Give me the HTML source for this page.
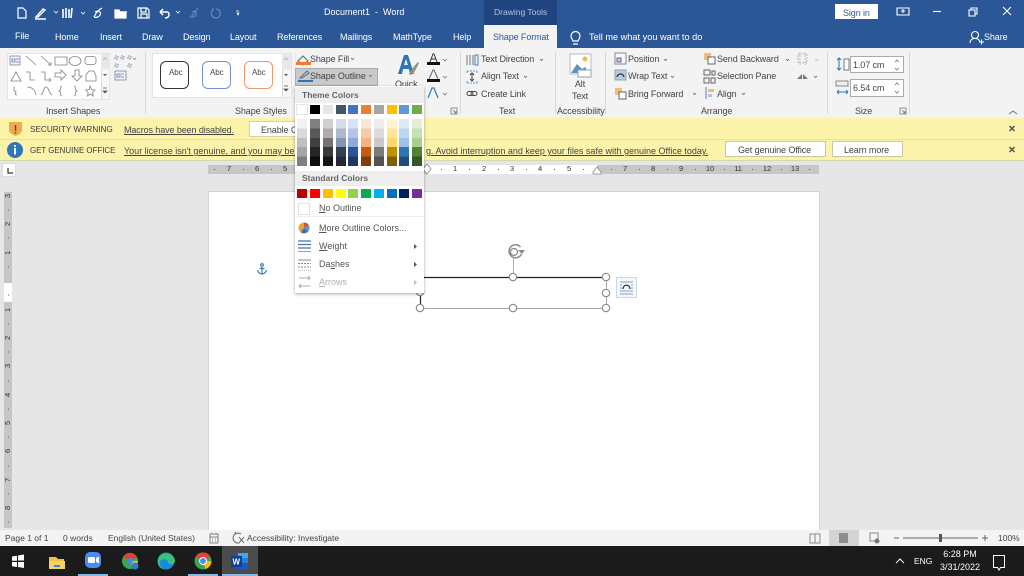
<!DOCTYPE html>
<html lang="en"><head><meta charset="utf-8"><title>Document1 - Word</title>
<style>
html,body{margin:0;padding:0;width:1024px;height:576px;overflow:hidden;background:#e6e6e6}
body{position:relative;font-family:"Liberation Sans",sans-serif;font-size:9px;letter-spacing:-.1px;color:#444}
.b,.t{position:absolute}
.t{white-space:nowrap;line-height:12px}
.w{color:#fff}
.c{transform:translateX(-50%)}
u{text-underline-offset:1px}
svg{position:absolute;left:0;top:0}
.r{font-size:7.5px;color:#333;line-height:8px;transform:translateX(-50%)}
.v{font-size:7.5px;color:#333;line-height:8px;left:8px;transform:translate(-50%,-50%) rotate(-90deg)}
.col{position:absolute;width:10px;top:119px;height:47px}
.sw{position:absolute;width:10px;height:9px}
.m{font-size:9px;letter-spacing:0;color:#555}
.s{font-size:8.5px;letter-spacing:0}
.caps{font-size:8.2px;letter-spacing:0;color:#3a3a3a}
</style></head><body>

<!-- base regions -->
<div class="b" style="left:0;top:0;width:1024px;height:48px;background:#2b5797"></div>
<div class="b" style="left:484px;top:0;width:73px;height:25px;background:#1f4480"></div>
<div class="b" style="left:484px;top:25px;width:73px;height:23px;background:#f3f3f3"></div>
<div class="b" style="left:0;top:48px;width:1024px;height:70px;background:#f3f3f3"></div>
<div class="b" style="left:0;top:118px;width:1024px;height:22px;background:#fbf3a9;border-bottom:1px solid #e6dfa8;box-sizing:border-box"></div>
<div class="b" style="left:0;top:140px;width:1024px;height:21px;background:#fbf3a9;border-bottom:1px solid #d9d5ac;box-sizing:border-box"></div>
<div class="b" style="left:209px;top:192px;width:610px;height:338px;background:#fff;box-shadow:0 0 0 1px #d4d4d4"></div>
<div class="b" style="left:0;top:530px;width:1024px;height:16px;background:#f3f3f3"></div>
<div class="b" style="left:0;top:546px;width:1024px;height:30px;background:#1b1b1b"></div>
<div class="b" style="left:829px;top:530px;width:30px;height:16px;background:#d4d4d4"></div>
<div class="b" style="left:222px;top:546px;width:36px;height:30px;background:#4b4b4b"></div>

<!-- galleries -->
<div class="b" style="left:8px;top:54px;width:101px;height:45px;background:#fff;box-shadow:0 0 0 1px #e4e4e4"></div>
<div class="b" style="left:153px;top:54px;width:138px;height:43px;background:#fff;box-shadow:0 0 0 1px #e4e4e4"></div>
<div class="b" style="left:101px;top:54px;width:9px;height:15px;background:#e8e8e8"></div>
<div class="b" style="left:282px;top:54px;width:9px;height:15px;background:#e8e8e8"></div>
<div class="b" style="left:101px;top:69px;width:8px;height:30px;background:#f6f6f6;border-left:1px solid #ddd;box-sizing:border-box"></div>
<div class="b" style="left:282px;top:69px;width:9px;height:28px;background:#f6f6f6;border-left:1px solid #ddd;box-sizing:border-box"></div>
<div class="b" style="left:160px;top:61px;width:29px;height:28px;border:1.5px solid #333;border-radius:6px;box-sizing:border-box"></div>
<div class="b" style="left:202px;top:61px;width:29px;height:28px;border:1.5px solid #7392cf;border-radius:6px;box-sizing:border-box"></div>
<div class="b" style="left:244px;top:61px;width:29px;height:28px;border:1.5px solid #ee9a62;border-radius:6px;box-sizing:border-box"></div>

<!-- spin boxes -->
<div class="b" style="left:850px;top:56px;width:54px;height:17px;background:#fff;border:1px solid #aaa;box-sizing:border-box"></div>
<div class="b" style="left:850px;top:79px;width:54px;height:18px;background:#fff;border:1px solid #aaa;box-sizing:border-box"></div>

<!-- Shape Outline hover -->
<div class="b" style="left:295px;top:68px;width:83px;height:18px;background:#c9c9c9;border:1px solid #aaa;box-sizing:border-box"></div>

<!-- Buttons in bars -->
<div class="b" style="left:249px;top:121px;width:60px;height:16px;background:#fff;border:1px solid #d6d2a8;box-sizing:border-box"></div>
<div class="b" style="left:725px;top:141px;width:101px;height:16px;background:#fff;border:1px solid #c9c6a2;box-sizing:border-box"></div>
<div class="b" style="left:832px;top:141px;width:71px;height:16px;background:#fff;border:1px solid #c9c6a2;box-sizing:border-box"></div>

<!-- Sign in -->
<div class="b" style="left:835px;top:4px;width:43px;height:15px;background:#fff"></div>

<!-- rulers -->
<div class="b" style="left:208px;top:165px;width:219px;height:9px;background:#c6c6c6"></div>
<div class="b" style="left:427px;top:165px;width:170px;height:9px;background:#fff"></div>
<div class="b" style="left:597px;top:165px;width:222px;height:9px;background:#c6c6c6"></div>
<div class="b" style="left:4px;top:192px;width:8px;height:336px;background:#c6c6c6"></div>
<div class="b" style="left:4px;top:283px;width:8px;height:19px;background:#fff"></div>
<div class="b" style="left:3px;top:164px;width:12px;height:12px;background:#fff;box-shadow:0 0 0 1px #ddd"></div>

<!-- horizontal ruler text -->
<span class="t r" style="left:229px;top:165px">7</span><span class="t r" style="left:257px;top:165px">6</span><span class="t r" style="left:285px;top:165px">5</span>
<span class="t r" style="left:455px;top:165px">1</span><span class="t r" style="left:484px;top:165px">2</span><span class="t r" style="left:512px;top:165px">3</span><span class="t r" style="left:540px;top:165px">4</span><span class="t r" style="left:569px;top:165px">5</span>
<span class="t r" style="left:625px;top:165px">7</span><span class="t r" style="left:653px;top:165px">8</span><span class="t r" style="left:681px;top:165px">9</span><span class="t r" style="left:710px;top:165px">10</span><span class="t r" style="left:738px;top:165px">11</span><span class="t r" style="left:767px;top:165px">12</span><span class="t r" style="left:795px;top:165px">13</span>
<!-- vertical ruler text -->
<span class="t v" style="top:196px">3</span><span class="t v" style="top:224px">2</span><span class="t v" style="top:253px">1</span><span class="t v" style="top:310px">1</span><span class="t v" style="top:338px">2</span><span class="t v" style="top:366px">3</span><span class="t v" style="top:395px">4</span><span class="t v" style="top:423px">5</span><span class="t v" style="top:451px">6</span><span class="t v" style="top:480px">7</span><span class="t v" style="top:508px">8</span>

<!-- icon overlay -->
<svg width="1024" height="576" viewBox="0 0 1024 576" fill="none">
<!-- ruler ticks -->
<path d="M214 169.500h1M243 169.500h1M271 169.500h1M299 169.500h1M441 169.500h1M469 169.500h1M498 169.500h1M526 169.500h1M554 169.500h1M583 169.500h1M611 169.500h1M639 169.500h1M667 169.500h1M695 169.500h1M724 169.500h1M752 169.500h1M781 169.500h1M809 169.500h1M8 210h1M8 238h1M8 267h1M8 295h1M8 324h1M8 352h1M8 381h1M8 409h1M8 437h1M8 466h1M8 494h1M8 522h1" stroke="#666"/>
<path d="M8 168v5h5" stroke="#333" stroke-width="1.200"/>
<path d="M597 167l4 5v2h-8v-2zM427 164l4 5-4 5-4-5z" fill="#fff" stroke="#888" stroke-width=".8"/>
<!-- QAT -->
<g stroke="#fff" stroke-width="1.200">
<path d="M18 8h5l3 3v7h-8z"/>
<path d="M36 17l7-8 2 1-7 7zM35 19h11" stroke-width="1.400"/><path d="M54 11l2 2 2-2" stroke-width=".8"/>
<path d="M63 9v9M66 8v10M69 9v9M72 8l-1 10" stroke-width="1.600"/><path d="M81 12l2 2 2-2" stroke-width=".8"/>
<path d="M94 17c2-5 6-8 8-9M95 12c3-2 7 0 5 3-1 2-4 3-6 2"/>
<path d="M115 18v-8h4l1 2h6v6z" fill="#fff"/><path d="M118 15l2-3h7"/>
<path d="M138 8h9l2 2v8h-11zM141 8v4h5V8M141 18v-4h6v4"/>
<path d="M160 12h7c3 0 3 6-2 6M160 12l3-3M160 12l3 3" stroke-width="1.500"/><path d="M176 11l2 2 2-2" stroke-width=".8"/>
<path d="M236 11h3M237 13h2l-1 2z" stroke-width=".8"/>
</g>
<g stroke="#6d86b3" stroke-width="1.200"><path d="M190 18l8-10M192 12c3-2 5 0 4 3-1 2-3 2-4 2"/><path d="M216 9a4.500 4.500 0 1 1-3 1M213 8v3"/></g>
<!-- window controls -->
<g stroke="#fff" stroke-width="1.100">
<path d="M897 8h12v7h-12zM901 11h4M903 9v4"/><path d="M933 11.500h8"/>
<path d="M969 10h6v6h-6zM971 10V8h6v6h-2"/><path d="M1003 7l8 8M1011 7l-8 8"/>
<path d="M573 41c0-1-2-2-2-5a4.500 4.500 0 1 1 9 0c0 3-2 4-2 5zM573 44h5" stroke-width="1.200"/>
<circle cx="975" cy="35" r="3.500"/><path d="M970 43c0-6 9-6 10-1M979 42h5M981.500 39.500v5"/>
</g>
<!-- insert shapes -->
<g stroke="#808080" stroke-width=".8">
<path d="M10 56h10v9H10z" fill="#eef2f8"/><path d="M12 59h3v3h-3zM16 59h3M16 62h3" stroke="#5f7fae"/>
<path d="M26 56l10 9M41 56l10 9M48 65h3v-3"/><path d="M55 57h12v8H55z"/><ellipse cx="75" cy="61" rx="6" ry="4.500"/><rect x="85" y="56.500" width="11" height="8" rx="2.500"/>
<path d="M11 81l5-9 5 9zM26 72h4v8h5M41 72h4v8h5M49 78l2 2-2 2M55 73h6v-3l5 5-5 5v-3h-6zM75 70v6h-3l5 5 5-5h-3v-6h-4M86 81v-6l3-4h5l2 5v5z"/>
<path d="M13 87c3 0-1 4 2 4s-2 4 2 4M27 87c5 0 8 3 9 8M41 95c3-1 2-8 5-8s3 7 6 8M62 86c-3 1 0 4-3 5 3 1 0 4 3 5M74 86c3 1 0 4 3 5-3 1 0 4-3 5M90 86l1.500 3.500 3.500.5-2.500 2.500.7 3.500-2.700-2-3 2 .7-3.500-2.500-2.500 3.500-.5z"/>
<path d="M115 56h3v3h-3zM121 56h3v3h-3zM128 56h3v3h-3zM115 64h3v3h-3zM128 64h3v3h-3z" stroke="#5b7aa8" stroke-dasharray="2 1"/>
<path d="M115 71h11v9h-11z" fill="#eef2f8"/><path d="M117 74h3v3h-3zM121 74h3M121 77h3" stroke="#5f7fae"/>
<path d="M133 58l1.500 1.500 1.500-1.500" stroke-width=".8"/>
</g>
<path d="M103 60l2-2 2 2M284 60l2-2 2 2" stroke="#bbb"/>
<path d="M103 74l2 2 2-2zM284 74l2 2 2-2z" fill="#555"/>
<path d="M103 88h4M103 91l2 2 2-2zM284 86h4M284 89l2 2 2-2z" stroke="#555" fill="#555" stroke-width=".7"/>
<!-- shape fill / outline icons -->
<path d="M298 61l5-5 5 5-5 4z" stroke="#666"/><path d="M296 62h15v3h-15z" fill="#ed7d31"/>
<path d="M298 80h15v2h-15z" fill="#2e74b5"/><path d="M300 78l7-7 2 2-7 5z" stroke="#4a6d9c"/>
<path d="M351 58l1.500 1.500 1.500-1.500M369 75l1.500 1.500 1.500-1.500" stroke="#666" stroke-width=".8"/>
<!-- WordArt -->
<path d="M398 74l6-19h4l6 19h-4l-1-5h-6l-1 5zM404 65h4l-2-6z" fill="#2e75b6"/><path d="M409 74c2-4 5-8 9-12l1 1c-2 4-4 9-8 12z" fill="#9b8e75"/>
<path d="M430 62l3-8h1l3 8M431 59h5" stroke="#333"/><path d="M427 62h13v3h-13z" fill="#111"/>
<path d="M429 79l4-9h1l4 9" stroke="#666"/><path d="M427 79h13v3h-13z" fill="#111"/>
<path d="M428 98l4-10h2l4 10" stroke="#3b80c4" stroke-width="1.300"/>
<path d="M443 59l2 2 2-2M443 76l2 2 2-2M443 93l2 2 2-2" stroke="#777" stroke-width=".8"/>
<path d="M451 108h6v6h-6zM453 110l3 3M456 111v2h-2" stroke="#777" stroke-width=".8"/>
<!-- text group -->
<path d="M467 55v10M470 55v10M473 55v10" stroke="#777"/><path d="M475 55h3v10h-3z" stroke="#4a7fb5"/>
<path d="M467 71h10M467 83h10M467 71v2M477 71v2M467 83v-2M477 81v2" stroke="#6d9ac4" stroke-dasharray="2 1"/><path d="M472 73v8M470 75l2-2 2 2M470 79l2 2 2-2" stroke="#444"/>
<rect x="467" y="91.500" width="6" height="4" rx="2" stroke="#444"/><rect x="471" y="91.500" width="6" height="4" rx="2" stroke="#444"/>
<path d="M540 59l1.500 1.500 1.500-1.500M524 76l1.500 1.500 1.500-1.500" stroke="#666" stroke-width=".8"/>
<!-- alt text -->
<path d="M570 54h21v20h-21z" fill="#fff" stroke="#bbb"/><circle cx="585" cy="59" r="2.500" fill="#f2b94b"/><path d="M571 73l6-9 5 5 3-2 4 6z" fill="#5e90c4"/><path d="M578 70h13v7h-13z" fill="#fff" stroke="#8aa"/>
<!-- arrange -->
<path d="M615 53h11v11h-11z" fill="#f7f7f7" stroke="#888"/><path d="M617 58h4v4h-4z" fill="#bfd0e6" stroke="#668"/>
<path d="M615 70h11v10h-11z" fill="#b9cbe3" stroke="#8aa"/><path d="M617 77c1-4 6-4 7 0" stroke="#333" stroke-width="1.300"/>
<path d="M615 88h7v7h-7z" fill="#f2be75"/><path d="M619 92h7v7h-7z" fill="#fff" stroke="#666"/>
<path d="M664 59l1.500 1.500 1.500-1.500M671 76l1.500 1.500 1.500-1.500M693 93l1.500 1.500 1.500-1.500M742 93l1.500 1.500 1.500-1.500M786 59l1.500 1.500 1.500-1.500M814 76l1.500 1.500 1.500-1.500" stroke="#666" stroke-width=".8"/>
<path d="M704 53h7v7h-7z" fill="#f2be75"/><path d="M708 57h7v7h-7z" fill="#fff" stroke="#666"/>
<path d="M704 70h6v5h-6zM704 78h5v5h-5zM711 78h4v5h-4zM712 71h3v4h-3z" stroke="#666"/>
<path d="M706 87v12" stroke="#4f81bd"/><path d="M708 89h6v3h-6z" fill="#f2be75"/><path d="M708 94h4v3h-4z" fill="#aac4e0"/>
<path d="M798 54h9v9h-9zM800 52v13M805 52v13" stroke="#bbb" stroke-dasharray="2 1"/><path d="M815 59l1.500 1.500 1.500-1.500" stroke="#bbb" stroke-width=".8"/>
<path d="M797 79l5-5v5zM803 74v5h5z" fill="#777"/>
<!-- size -->
<path d="M844 59h5v11h-5z" fill="#fff" stroke="#777"/><path d="M839 58v12M837 60l2-2 2 2M837 68l2 2 2-2" stroke="#2e75b6"/>
<path d="M836 81h12v5h-12z" fill="#eee" stroke="#888"/><path d="M837 92h11M837 92l2-2M837 92l2 2M848 92l-2-2M848 92l-2 2" stroke="#2e75b6"/>
<path d="M895 62l2-2 2 2M895 68l2 2 2-2M895 85l2-2 2 2M895 91l2 2 2-2" stroke="#777" stroke-width=".8"/>
<path d="M900 108h6v6h-6zM902 110l3 3M905 111v2h-2" stroke="#777" stroke-width=".8"/>
<path d="M1009 114l4-3 4 3" stroke="#777"/>
<!-- separators -->
<path d="M145.500 52v62M460.500 52v62M555.500 52v62M605.500 52v62M827.500 52v62M909.500 52v62" stroke="#d8d8d8"/>
<path d="M295.500 52v16" stroke="#e8e8e8"/>
<!-- bars -->
<path d="M9 122h13v8c0 3-4 5-6.500 6-2.500-1-6.500-3-6.500-6z" fill="#e9ae4e"/><path d="M15.500 125v6M15.500 132v1.500" stroke="#7a4a10" stroke-width="1.500"/>
<circle cx="15" cy="150" r="8" fill="#2f77bd"/><path d="M15 148v6.500M15 145v1.800" stroke="#fff" stroke-width="2"/>
<path d="M1009.500 126l5 5M1014.500 126l-5 5M1009.500 147l5 5M1014.500 147l-5 5" stroke="#555" stroke-width="1.500"/>
<!-- anchor -->
<g stroke="#3b76b8" stroke-width="1.200"><circle cx="262" cy="265" r="1.300"/><path d="M262 267v7M259.500 268.500h5M257.500 270c.5 2.500 2.500 4 4.500 4s4-1.500 4.500-4"/></g>
<!-- shape -->
<path d="M420.500 293v15M420 308.500h186M606.500 277v31" stroke="#a6a6a6"/>
<path d="M420 277.500h186" stroke="#222" stroke-width="1.200"/>
<path d="M420.500 293v14" stroke="#222" stroke-width="1.200"/>
<path d="M513.500 258v15" stroke="#b0b0b0"/>
<g fill="#fff" stroke="#8a8a8a" stroke-width="1.200"><circle cx="513" cy="277" r="3.700"/><circle cx="606" cy="277" r="3.700"/><circle cx="606" cy="293" r="3.700"/><circle cx="420" cy="308" r="3.700"/><circle cx="513" cy="308" r="3.700"/><circle cx="606" cy="308" r="3.700"/><circle cx="420" cy="292" r="3.700"/></g>
<path d="M520.500 247a6.500 6.500 0 1 0 1 7" stroke="#8a8a8a" stroke-width="1.500"/><circle cx="514" cy="252" r="3.500" stroke="#8a8a8a" stroke-width="1.200"/><path d="M518 250h7l-3 4z" fill="#8a8a8a"/>
<path d="M616.500 277.500h20v20h-20z" fill="#f4f7fb" stroke="#cfd6de"/><path d="M620 282h13M620 285h2M631 285h2M620 288h2M631 288h2M620 291h13M620 294h13" stroke="#7ea0c9"/><path d="M623 289c0-5 7-5 7 0" stroke="#333" stroke-width="1.300"/>
<!-- status -->
<path d="M210 534h8v9h-8zM210 537h8M212 534v-1M216 534v-1M212 539h1M215 539h1M212 541h1M215 541h1" stroke="#666" stroke-width=".8"/>
<path d="M241 534a5 5 0 1 0-2 9M239 537l5 6M244 537l-5 6M235 532l1 2" stroke="#555" stroke-width=".9"/>
<path d="M810 534h5v9h-5zM815 534h5v9h-5z" stroke="#888"/><path d="M839 533h9v10h-9z" fill="#8e8e8e"/><path d="M870 533h8v8h-8zM876 539l3 3" stroke="#888"/><circle cx="877" cy="541" r="2.500" fill="#777"/>
<path d="M894 538h5M903 538h75M982 538h6M985 535v6" stroke="#666"/><path d="M939 534h3v8h-3z" fill="#555"/>
<!-- taskbar -->
<path d="M12 556.500l5-.8v5h-5zM18 555.500l6-1v6h-6zM12 562h5v5l-5-.8zM18 562h6v6l-6-1z" fill="#fff"/>
<path d="M49 557h7l2 2h6v4H49z" fill="#f5c33b"/><path d="M49 561h16v8H49z" fill="#f5d36c"/><path d="M54 565h6v2h-6z" fill="#3f88c5"/>
<rect x="85" y="552" width="16" height="16" rx="5" fill="#4a8cf7"/><rect x="88" y="557" width="7" height="6" rx="1.500" fill="#fff"/><path d="M96 558l3-1.500v7L96 562z" fill="#fff"/>
<circle cx="130" cy="561" r="8" fill="#3aa757"/><path d="M130 561l-7-4a8 8 0 0 1 14 0z" fill="#db4437"/><path d="M130 561h8a8 8 0 0 1-5 7z" fill="#f4c20d"/><circle cx="130" cy="561" r="3" fill="#4a86e8"/><circle cx="135" cy="566" r="3.500" fill="#2d7dd2"/>
<circle cx="166" cy="561" r="8.500" fill="#1c8ad8"/><path d="M158 560c2-9 16-9 17 1 0 3-5 4-7 2 1-3-4-5-7-3-2 2-2 7 3 9-4 0-7-4-6-9z" fill="#39c27e"/>
<circle cx="203" cy="561" r="8.500" fill="#34a853"/><path d="M203 561l-7.500-4a8.500 8.500 0 0 1 15 0z" fill="#ea4335"/><path d="M203 561h8.500a8.500 8.500 0 0 1-6 8z" fill="#fbbc05"/><circle cx="203" cy="561" r="3.500" fill="#4a8cf7" stroke="#fff"/>
<path d="M236 553h12v16h-12z" fill="#185abd"/><path d="M238 553h10v5h-10z" fill="#41a5ee"/><path d="M238 558h10v5h-10z" fill="#2b7cd3"/><path d="M231 556h11v11h-11z" fill="#103f91"/>
<path d="M78 575h30M188 575h30M222 575h36" stroke="#8ab8e6" stroke-width="2"/>
<path d="M896 563l4-4 4 4" stroke="#fff"/>
<path d="M993.500 555.500h11v12h-4l-1.500 2.500-1.500-2.500h-4z" stroke="#fff"/>
<text x="232.500" y="564.500" fill="#fff" font-family="Liberation Sans" font-size="8" font-weight="bold">W</text>
</svg>

<!-- top text -->
<span class="t w" style="left:324px;top:6px;letter-spacing:0">Document1&nbsp; -&nbsp; Word</span>
<span class="t" style="left:494px;top:6px;color:#b4c4dc;letter-spacing:0;font-size:8.500px">Drawing Tools</span>
<span class="t" style="left:843px;top:7px;color:#2b5797">Sign in</span>
<span class="t w" style="left:15px;top:30px">File</span>
<span class="t w" style="left:55px;top:31px">Home</span>
<span class="t w" style="left:100px;top:31px">Insert</span>
<span class="t w" style="left:142px;top:31px">Draw</span>
<span class="t w" style="left:183px;top:31px">Design</span>
<span class="t w" style="left:230px;top:31px">Layout</span>
<span class="t w" style="left:277px;top:31px">References</span>
<span class="t w" style="left:340px;top:31px">Mailings</span>
<span class="t w" style="left:393px;top:31px">MathType</span>
<span class="t w" style="left:453px;top:31px">Help</span>
<span class="t" style="left:493px;top:31px;color:#2b5797">Shape Format</span>
<span class="t w" style="left:589px;top:31px;letter-spacing:0;font-size:9.200px">Tell me what you want to do</span>
<span class="t w" style="left:984px;top:31px">Share</span>

<!-- ribbon text -->
<span class="t" style="left:169px;top:67px;font-size:8px">Abc</span>
<span class="t" style="left:210px;top:67px;font-size:8px">Abc</span>
<span class="t" style="left:252px;top:67px;font-size:8px">Abc</span>
<span class="t" style="left:310px;top:53px">Shape Fill</span>
<span class="t" style="left:310px;top:70px">Shape Outline</span>
<span class="t" style="left:395px;top:78px">Quick</span>
<span class="t" style="left:481px;top:53px">Text Direction</span>
<span class="t" style="left:481px;top:70px">Align Text</span>
<span class="t" style="left:481px;top:88px">Create Link</span>
<span class="t c" style="left:580px;top:78px">Alt</span>
<span class="t c" style="left:580px;top:90px">Text</span>
<span class="t" style="left:628px;top:53px">Position</span>
<span class="t" style="left:628px;top:70px">Wrap Text</span>
<span class="t" style="left:628px;top:88px">Bring Forward</span>
<span class="t" style="left:717px;top:53px">Send Backward</span>
<span class="t" style="left:717px;top:70px">Selection Pane</span>
<span class="t" style="left:717px;top:88px">Align</span>
<span class="t" style="left:853px;top:59px">1.07 cm</span>
<span class="t" style="left:853px;top:82px">6.54 cm</span>
<span class="t" style="left:46px;top:105px">Insert Shapes</span>
<span class="t" style="left:235px;top:105px">Shape Styles</span>
<span class="t" style="left:384px;top:105px">Styles</span>
<span class="t" style="left:499px;top:105px">Text</span>
<span class="t" style="left:557px;top:105px">Accessibility</span>
<span class="t" style="left:701px;top:105px">Arrange</span>
<span class="t" style="left:855px;top:105px">Size</span>

<!-- message bars -->
<span class="t caps" style="left:30px;top:124px">SECURITY WARNING</span>
<span class="t" style="left:124px;top:124px"><u>Macros have been disabled.</u></span>
<span class="t" style="left:261px;top:124px">Enable Content</span>
<span class="t caps" style="left:30px;top:145px;font-size:7.900px">GET GENUINE OFFICE</span>
<span class="t" style="left:124px;top:145px;width:172px;overflow:hidden;letter-spacing:0"><u>Your license isn't genuine, and you may be a victim of software counterfeiting</u></span>
<span class="t" style="left:426px;top:145px;letter-spacing:0"><u>g. Avoid interruption and keep your files safe with genuine Office today.</u></span>
<span class="t" style="left:738px;top:144px">Get genuine Office</span>
<span class="t" style="left:844px;top:144px">Learn more</span>

<!-- status text -->
<span class="t s" style="left:5px;top:532px">Page 1 of 1</span>
<span class="t s" style="left:63px;top:532px">0 words</span>
<span class="t s" style="left:108px;top:532px">English (United States)</span>
<span class="t s" style="left:247px;top:532px">Accessibility: Investigate</span>
<span class="t s" style="left:998px;top:532px">100%</span>

<!-- tray text -->
<span class="t" style="left:914px;top:555px;color:#fff;letter-spacing:0;font-size:8.500px">ENG</span>
<span class="t c" style="left:960px;top:548px;color:#fff;letter-spacing:0">6:28 PM</span>
<span class="t c" style="left:960px;top:561px;color:#fff;letter-spacing:0">3/31/2022</span>

<!-- dropdown menu -->
<div class="b" style="left:295px;top:86px;width:129px;height:207px;background:#fff;box-shadow:0 1px 3px rgba(0,0,0,.35)">
</div>
<div class="b" style="left:295px;top:87px;width:129px;height:16px;background:#eee"></div>
<div class="b" style="left:295px;top:171px;width:129px;height:15px;background:#eee"></div>
<div class="b" style="left:295px;top:216px;width:129px;height:1px;background:#eee"></div>
<span class="t" style="left:302px;top:89px;font-weight:bold;font-size:8.500px;letter-spacing:0;color:#666">Theme Colors</span>
<span class="t" style="left:302px;top:172px;font-weight:bold;font-size:8.500px;letter-spacing:0;color:#666">Standard Colors</span>

<div class="sw" style="left:297px;top:105px;background:#fff;box-shadow:0 0 0 1px #e4e4e4"></div>
<div class="sw" style="left:310px;top:105px;background:#000"></div>
<div class="sw" style="left:323px;top:105px;background:#e7e6e6"></div>
<div class="sw" style="left:336px;top:105px;background:#44546a"></div>
<div class="sw" style="left:348px;top:105px;background:#4472c4"></div>
<div class="sw" style="left:361px;top:105px;background:#ed7d31"></div>
<div class="sw" style="left:374px;top:105px;background:#a5a5a5"></div>
<div class="sw" style="left:387px;top:105px;background:#ffc000"></div>
<div class="sw" style="left:399px;top:105px;background:#5b9bd5"></div>
<div class="sw" style="left:412px;top:105px;background:#70ad47"></div>

<div class="col" style="left:297px;background:linear-gradient(#f2f2f2 20%,#d9d9d9 20% 40%,#bfbfbf 40% 60%,#a6a6a6 60% 80%,#808080 80%)"></div>
<div class="col" style="left:310px;background:linear-gradient(#808080 20%,#595959 20% 40%,#404040 40% 60%,#262626 60% 80%,#0d0d0d 80%)"></div>
<div class="col" style="left:323px;background:linear-gradient(#d0cece 20%,#afabab 20% 40%,#767171 40% 60%,#3b3838 60% 80%,#171616 80%)"></div>
<div class="col" style="left:336px;background:linear-gradient(#d6dce5 20%,#adb9ca 20% 40%,#8497b0 40% 60%,#333f50 60% 80%,#222a35 80%)"></div>
<div class="col" style="left:348px;background:linear-gradient(#d9e2f3 20%,#b4c6e7 20% 40%,#8eaadb 40% 60%,#2f5496 60% 80%,#1f3864 80%)"></div>
<div class="col" style="left:361px;background:linear-gradient(#fbe5d6 20%,#f7caac 20% 40%,#f4b183 40% 60%,#c55a11 60% 80%,#833c0b 80%)"></div>
<div class="col" style="left:374px;background:linear-gradient(#ededed 20%,#dbdbdb 20% 40%,#c9c9c9 40% 60%,#7b7b7b 60% 80%,#525252 80%)"></div>
<div class="col" style="left:387px;background:linear-gradient(#fff2cc 20%,#ffe599 20% 40%,#ffd966 40% 60%,#bf9000 60% 80%,#7f6000 80%)"></div>
<div class="col" style="left:399px;background:linear-gradient(#deeaf6 20%,#bdd7ee 20% 40%,#9cc3e5 40% 60%,#2e75b5 60% 80%,#1e4e79 80%)"></div>
<div class="col" style="left:412px;background:linear-gradient(#e2efd9 20%,#c5e0b3 20% 40%,#a8d08d 40% 60%,#538135 60% 80%,#375623 80%)"></div>

<div class="sw" style="left:297px;top:189px;background:#c00000"></div>
<div class="sw" style="left:310px;top:189px;background:#ff0000"></div>
<div class="sw" style="left:323px;top:189px;background:#ffc000"></div>
<div class="sw" style="left:336px;top:189px;background:#ffff00"></div>
<div class="sw" style="left:348px;top:189px;background:#92d050"></div>
<div class="sw" style="left:361px;top:189px;background:#00b050"></div>
<div class="sw" style="left:374px;top:189px;background:#00b0f0"></div>
<div class="sw" style="left:387px;top:189px;background:#0070c0"></div>
<div class="sw" style="left:399px;top:189px;background:#002060"></div>
<div class="sw" style="left:412px;top:189px;background:#7030a0"></div>

<svg width="1024" height="576" viewBox="0 0 1024 576" fill="none">
<path d="M298.500 203.500h11v11h-11z" fill="#fff" stroke="#e0e0e0"/>
<circle cx="304" cy="228" r="5.500" fill="#e8a33d"/><path d="M304 228v-5.500a5.500 5.500 0 0 1 5 3z" fill="#d0533b"/><path d="M304 228l5-2.500a5.500 5.500 0 0 1-1 6z" fill="#5b9bd5"/><path d="M304 228l4 3.500a5.500 5.500 0 0 1-7 1z" fill="#3d6fb0"/>
<path d="M298 241h13M298 244.500h13M298 248h13" stroke="#4a74ab" stroke-width="1.300"/><path d="M298 251.500h13" stroke="#8a9fbd"/>
<path d="M298 260h13" stroke="#888"/><path d="M298 263.500h13M298 267h13" stroke="#888" stroke-dasharray="2 1"/><path d="M298 270.500h13" stroke="#bbb" stroke-dasharray="1 1"/>
<path d="M299 278h11M308 276l2 2-2 2M299 286h11M301 284l-2 2 2 2" stroke="#aab"/>
<path d="M414 244l3 2.500-3 2.500zM414 262l3 2.500-3 2.500z" fill="#555"/><path d="M414 280l3 2.500-3 2.500z" fill="#bbb"/>
</svg>

<span class="t m" style="left:319px;top:202px"><u>N</u>o Outline</span>
<span class="t m" style="left:319px;top:222px"><u>M</u>ore Outline Colors...</span>
<span class="t m" style="left:319px;top:240px"><u>W</u>eight</span>
<span class="t m" style="left:319px;top:258px">Da<u>s</u>hes</span>
<span class="t m" style="left:319px;top:276px;color:#b0b0b0"><u>A</u>rrows</span>

</body></html>
